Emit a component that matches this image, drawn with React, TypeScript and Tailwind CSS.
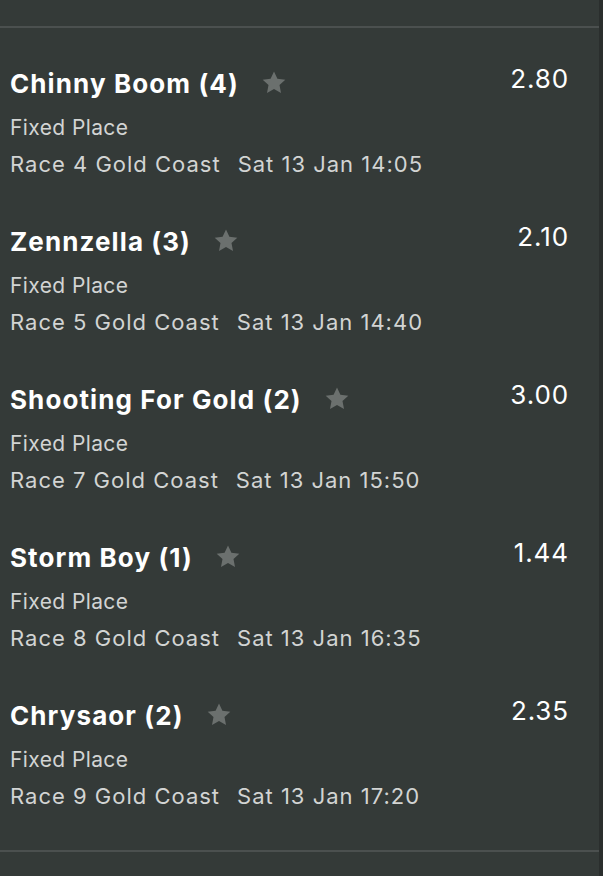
import React from "react";

const rows = [
  { name: "Chinny Boom (4)", race: "Race 4 Gold Coast", time: "Sat 13 Jan 14:05", odds: "2.80" },
  { name: "Zennzella (3)", race: "Race 5 Gold Coast", time: "Sat 13 Jan 14:40", odds: "2.10" },
  { name: "Shooting For Gold (2)", race: "Race 7 Gold Coast", time: "Sat 13 Jan 15:50", odds: "3.00" },
  { name: "Storm Boy (1)", race: "Race 8 Gold Coast", time: "Sat 13 Jan 16:35", odds: "1.44" },
  { name: "Chrysaor (2)", race: "Race 9 Gold Coast", time: "Sat 13 Jan 17:20", odds: "2.35" },
];

function Star() {
  return (
    <svg width="24" height="24" viewBox="0 0 24 24" className="shrink-0 -mt-[3px]">
      <path
        d="M12 0.6l3.4 7.1 7.9 1-5.8 5.4 1.5 7.8L12 18l-7 3.9 1.5-7.8L0.7 8.7l7.9-1z"
        fill="#6b706e"
      />
    </svg>
  );
}

export default function App() {
  return (
    <div
      className="w-[603px] h-[876px] bg-[#343a38] flex overflow-hidden"
      style={{ fontFamily: "Inter, 'Liberation Sans', sans-serif" }}
    >
      <div className="w-[599px] flex flex-col">
        <div className="h-[26px]" />
        <div className="h-[2px] bg-[#4b504f]" />
        <div className="py-4 flex flex-col">
          {rows.map((r) => (
            <div key={r.name} className="flex pl-[10px] pr-[30px]">
              <div className="flex-1 flex flex-col pt-6 pb-6">
                <div className="h-8 flex items-center gap-[23px]">
                  <span className="text-[26px] font-bold text-white leading-8 tracking-[1.1px]">{r.name}</span>
                  <Star />
                </div>
                <div className="mt-[14px] h-7 flex items-center text-[21px] text-[#d2d4d3] leading-7 tracking-[0.4px]">
                  Fixed Place
                </div>
                <div className="mt-2 h-7 flex items-center text-[22px] text-[#d2d4d3] leading-7 tracking-[1px]">
                  <span>{r.race}</span>
                  <span className="ml-[17px]">{r.time}</span>
                </div>
              </div>
              <div className="pt-[19px] text-[26px] text-white leading-8 tracking-[0.9px]">{r.odds}</div>
            </div>
          ))}
        </div>
        <div className="h-[2px] bg-[#4b504f]" />
      </div>
      <div className="w-[4px] bg-[#2a2e2d]" />
    </div>
  );
}
